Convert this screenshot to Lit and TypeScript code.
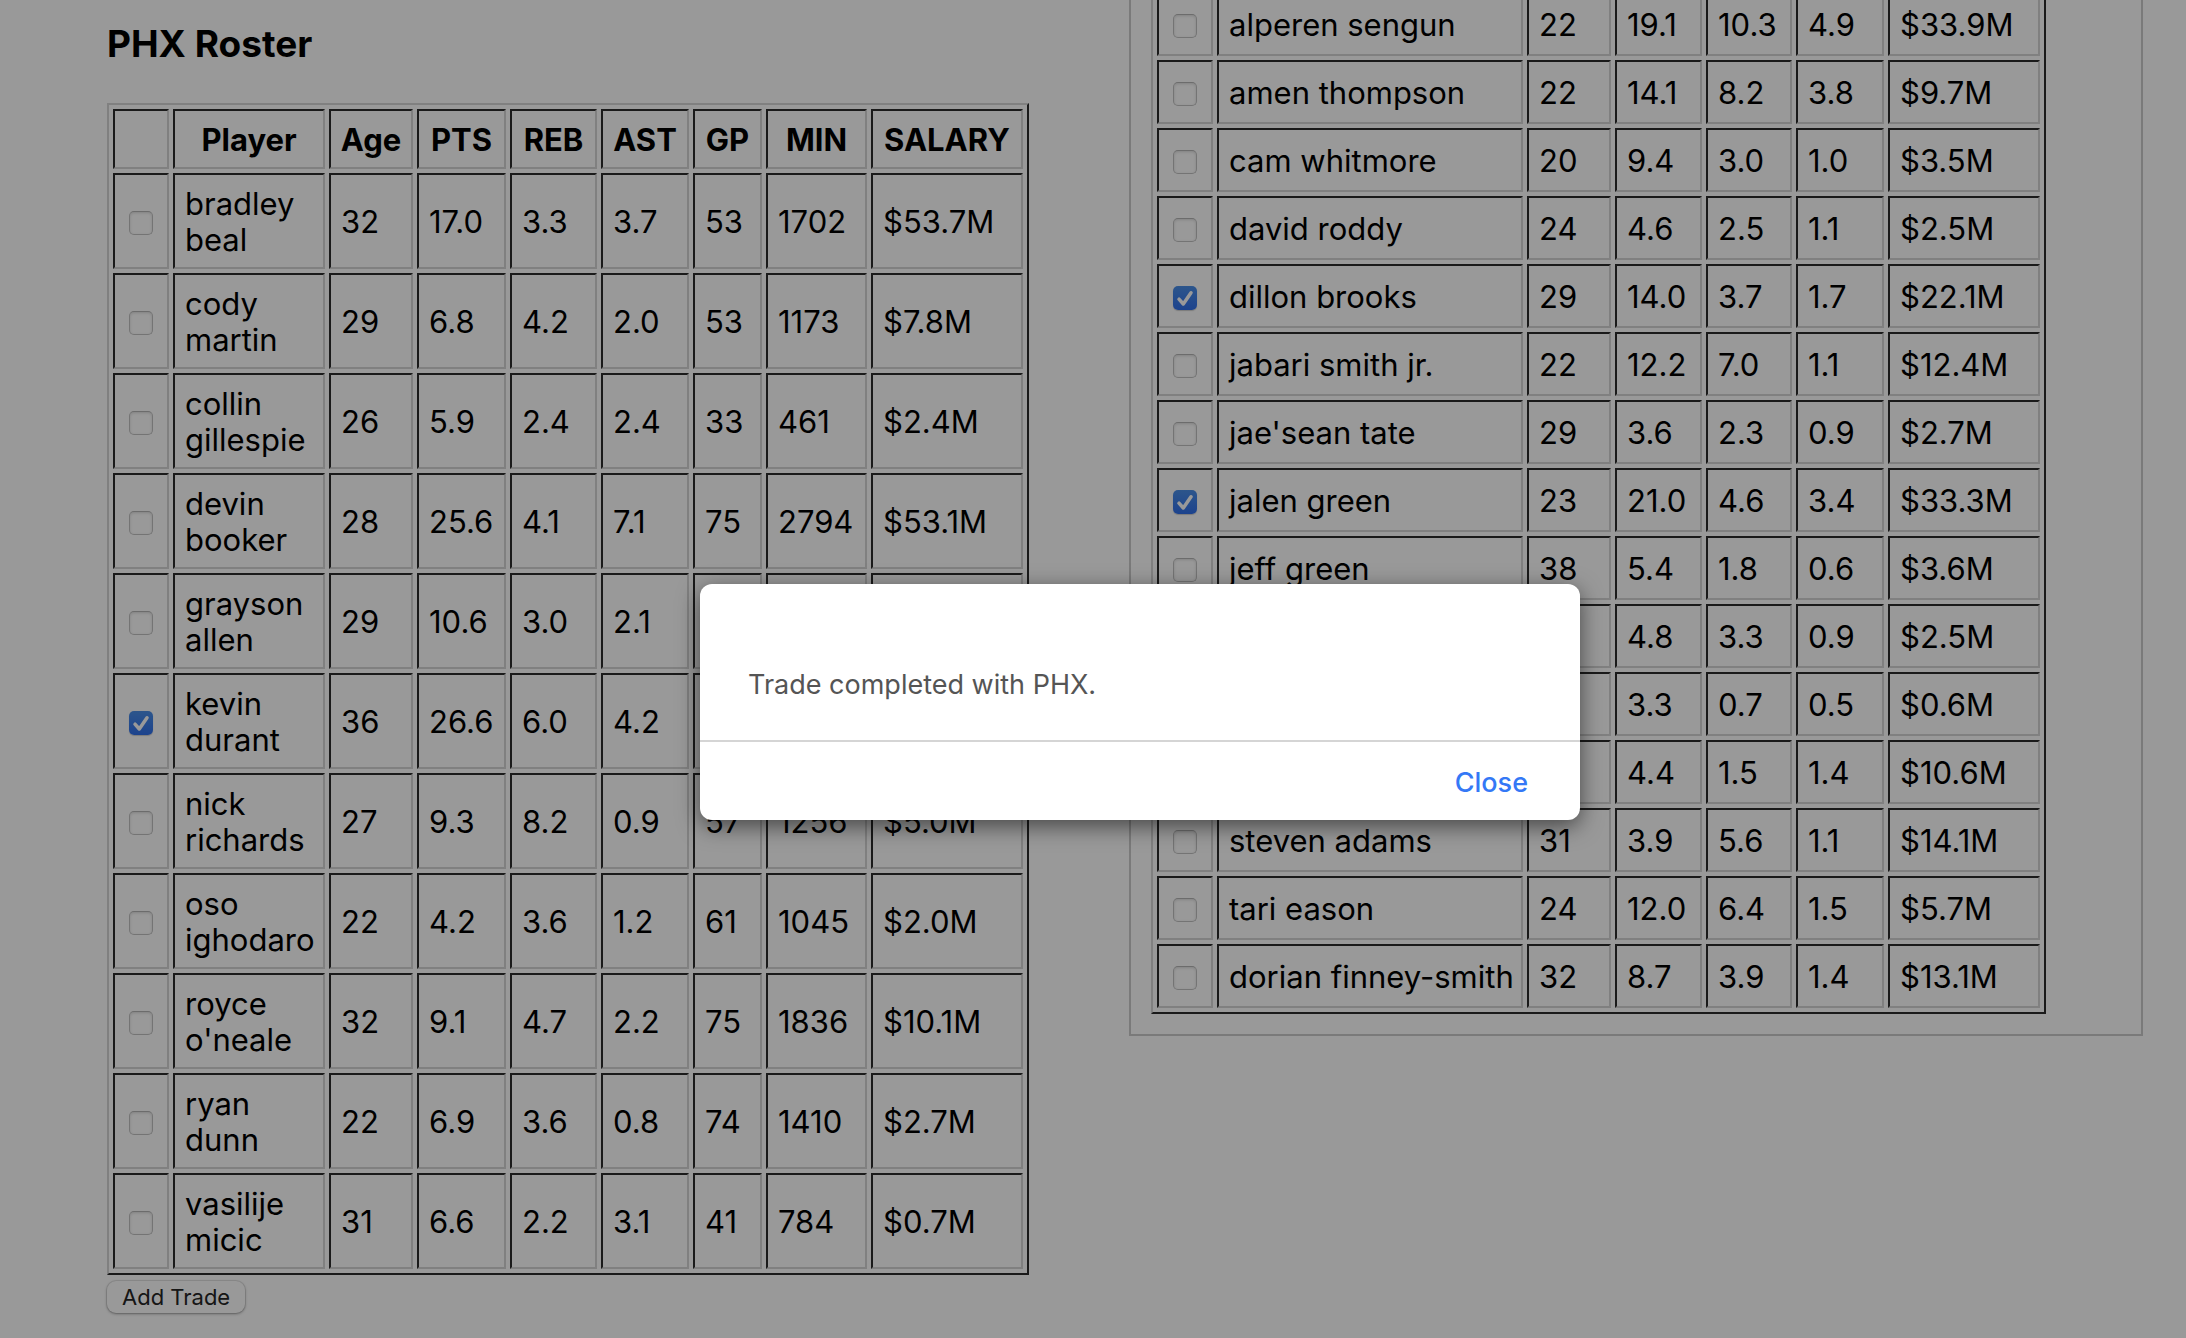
import { LitElement, html, css, nothing } from "lit";
import { customElement, property, state } from "lit/decorators.js";
import { classMap } from "lit/directives/class-map.js";

interface Player {
  name: string;
  stats: string[];
  picked?: boolean;
}

const row = (name: string, stats: string, picked = false): Player => ({
  name,
  stats: stats.split(","),
  picked,
});

const PHX: Player[] = [
  row("bradley beal", "32,17.0,3.3,3.7,53,1702,$53.7M"),
  row("cody martin", "29,6.8,4.2,2.0,53,1173,$7.8M"),
  row("collin gillespie", "26,5.9,2.4,2.4,33,461,$2.4M"),
  row("devin booker", "28,25.6,4.1,7.1,75,2794,$53.1M"),
  row("grayson allen", "29,10.6,3.0,2.1,,,"),
  row("kevin durant", "36,26.6,6.0,4.2,,,", true),
  row("nick richards", "27,9.3,8.2,0.9,57,1256,$5.0M"),
  row("oso ighodaro", "22,4.2,3.6,1.2,61,1045,$2.0M"),
  row("royce o'neale", "32,9.1,4.7,2.2,75,1836,$10.1M"),
  row("ryan dunn", "22,6.9,3.6,0.8,74,1410,$2.7M"),
  row("vasilije micic", "31,6.6,2.2,3.1,41,784,$0.7M"),
];

const HOU: Player[] = [
  row("alperen sengun", "22,19.1,10.3,4.9,$33.9M"),
  row("amen thompson", "22,14.1,8.2,3.8,$9.7M"),
  row("cam whitmore", "20,9.4,3.0,1.0,$3.5M"),
  row("david roddy", "24,4.6,2.5,1.1,$2.5M"),
  row("dillon brooks", "29,14.0,3.7,1.7,$22.1M", true),
  row("jabari smith jr.", "22,12.2,7.0,1.1,$12.4M"),
  row("jae'sean tate", "29,3.6,2.3,0.9,$2.7M"),
  row("jalen green", "23,21.0,4.6,3.4,$33.3M", true),
  row("jeff green", "38,5.4,1.8,0.6,$3.6M"),
  row("", ",4.8,3.3,0.9,$2.5M"),
  row("", ",3.3,0.7,0.5,$0.6M"),
  row("", ",4.4,1.5,1.4,$10.6M"),
  row("steven adams", "31,3.9,5.6,1.1,$14.1M"),
  row("tari eason", "24,12.0,6.4,1.5,$5.7M"),
  row("dorian finney-smith", "32,8.7,3.9,1.4,$13.1M"),
];

@customElement("roster-table")
export class RosterTable extends LitElement {
  @property({ attribute: false }) players: Player[] = [];
  @property({ attribute: false }) headings: string[] = [];
  @property({ type: Boolean }) wide = false;

  static styles = css`
    :host {
      display: block;
    }
    .roster {
      border: 2px solid;
      border-color: #d5d5d5 #2c2c2c #2c2c2c #d5d5d5;
      border-collapse: separate;
      border-spacing: 4px;
      font-size: 31px;
      line-height: 36px;
    }
    .cell,
    .head {
      box-sizing: border-box;
      border: 2px solid;
      border-color: #2c2c2c #d5d5d5 #d5d5d5 #2c2c2c;
      padding: 11px 6px 9px 10px;
      text-align: left;
      vertical-align: middle;
    }
    .head {
      padding: 11px 8px 9px;
      font-weight: 700;
      text-align: center;
    }
    .pick {
      width: 56px;
      padding: 0 10px;
    }
    .c0 { width: 152px; }
    .c1 { width: 84px; }
    .c2 { width: 89px; }
    .c3 { width: 87px; }
    .c4 { width: 88px; }
    .c5 { width: 69px; }
    .c6 { width: 101px; }
    .c7 { width: 152px; }
    .wide .c0 {
      width: 306px;
      white-space: nowrap;
    }
    .wide .c2 { width: 87px; }
    .wide .c3 { width: 86px; }
    .wide .c5 { width: 152px; }
    .box {
      appearance: none;
      display: block;
      box-sizing: border-box;
      width: 24px;
      height: 24px;
      margin: 20px 4px 16px;
      border: 1px solid #c2c2c2;
      border-top-color: #b4b4b4;
      border-radius: 5px;
      background: #ffffff;
      box-shadow: inset 0 1px 3px rgba(0, 0, 0, 0.15);
    }
    .box:checked {
      border: 0;
      background: linear-gradient(#4b8fe8, #3070ec);
      box-shadow: 0 1px 1px rgba(0, 0, 0, 0.2);
    }
    .hold {
      display: grid;
    }
    .hold > * {
      grid-area: 1 / 1;
    }
    .tick {
      place-self: center;
      width: 24px;
      height: 24px;
      margin-top: 4px;
      pointer-events: none;
      fill: none;
      stroke: #ffffff;
      stroke-width: 3.5;
      stroke-linecap: round;
      stroke-linejoin: round;
    }
  `;

  private toggle(p: Player) {
    p.picked = !p.picked;
    this.requestUpdate();
  }

  render() {
    return html`
      <table class=${classMap({ roster: true, wide: this.wide })}>
        ${this.headings.length
          ? html`<thead>
              <tr>
                <th class="head pick"></th>
                ${this.headings.map((h, i) => html`<th class="head c${i}" scope="col">${h}</th>`)}
              </tr>
            </thead>`
          : nothing}
        <tbody>
          ${this.players.map(
            (p) => html`<tr>
              <td class="cell pick">
                <div class="hold">
                  <input
                    class="box"
                    type="checkbox"
                    aria-label=${p.name || "player"}
                    .checked=${!!p.picked}
                    @change=${() => this.toggle(p)}
                  />
                  ${p.picked
                    ? html`<svg class="tick" viewBox="0 0 24 24" aria-hidden="true">
                        <path d="M6 13.2 L10.3 18 L18 6.8" />
                      </svg>`
                    : nothing}
                </div>
              </td>
              ${[p.name, ...p.stats].map((v, i) => html`<td class="cell c${i}">${v}</td>`)}
            </tr>`
          )}
        </tbody>
      </table>
    `;
  }
}

@customElement("app-root")
export class AppRoot extends LitElement {
  @state() private open = true;

  static styles = css`
    :host {
      display: block;
      position: relative;
      height: 100vh;
      overflow: hidden;
      background: #ffffff;
      color: #000000;
      font-family: Inter, "Liberation Sans", sans-serif;
    }
    .teams {
      display: grid;
      grid-template-columns: 1fr 1fr;
      align-items: start;
      gap: 30px;
      padding: 0 43px 0 85px;
    }
    .team {
      padding: 22px 22px 24px;
    }
    .framed {
      margin-top: -14px;
      padding: 0 20px 20px;
      border: 2px solid #cccccc;
      border-top: 0;
    }
    .title {
      margin: 0 0 37px;
      font-size: 37px;
      line-height: 44px;
      font-weight: 700;
    }
    .add {
      display: block;
      height: 32px;
      margin-top: 6px;
      padding: 0 15px;
      border: 0;
      border-radius: 9px;
      background: #ffffff;
      box-shadow: 0 0 0 1px rgba(0, 0, 0, 0.08), 0 1px 3px rgba(0, 0, 0, 0.35);
      color: #262626;
      font: 400 22px/32px Inter, "Liberation Sans", sans-serif;
    }
    .shade {
      position: absolute;
      inset: 0;
      box-sizing: border-box;
      display: flex;
      align-items: center;
      justify-content: center;
      padding: 66px 0 0 94px;
      background: rgba(0, 0, 0, 0.4);
    }
    .dialog {
      position: static;
      width: 880px;
      margin: 0;
      padding: 0;
      border: 0;
      border-radius: 12px;
      background: #ffffff;
      box-shadow: 0 6px 22px rgba(0, 0, 0, 0.55);
      font-size: 27px;
      line-height: 32px;
    }
    .message {
      margin: 0;
      padding: 85px 48px 39px;
      color: #555555;
    }
    .actions {
      display: flex;
      justify-content: flex-end;
      padding: 25px 52px 21px;
      border-top: 2px solid #d5d5d5;
    }
    .close {
      padding: 0;
      border: 0;
      background: none;
      color: #3478f6;
      font: inherit;
      font-weight: 500;
      outline: none;
    }
  `;

  render() {
    return html`
      <main class="teams">
        <section class="team">
          <h3 class="title">PHX Roster</h3>
          <roster-table
            .headings=${["Player", "Age", "PTS", "REB", "AST", "GP", "MIN", "SALARY"]}
            .players=${PHX}
          ></roster-table>
          <button class="add" type="button">Add Trade</button>
        </section>
        <section class="framed">
          <roster-table wide .players=${HOU}></roster-table>
        </section>
      </main>
      ${this.open
        ? html`<div class="shade">
            <dialog class="dialog" open>
              <p class="message">Trade completed with PHX.</p>
              <div class="actions">
                <button class="close" type="button" @click=${() => (this.open = false)}>Close</button>
              </div>
            </dialog>
          </div>`
        : nothing}
    `;
  }
}
